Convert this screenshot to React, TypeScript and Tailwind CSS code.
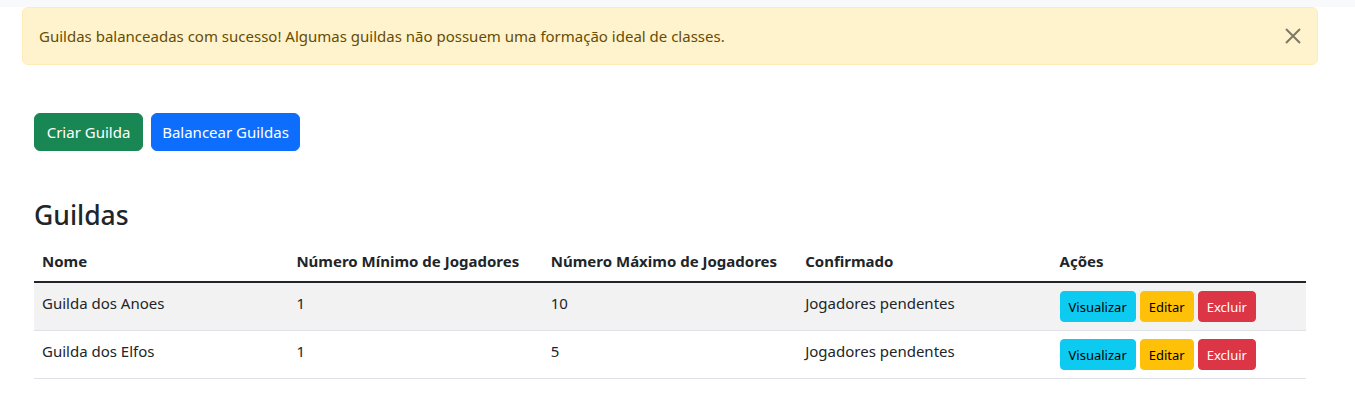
const guildas = [
  { nome: "Guilda dos Anoes", min: 1, max: 10, status: "Jogadores pendentes" },
  { nome: "Guilda dos Elfos", min: 1, max: 5, status: "Jogadores pendentes" },
];

const colunas = ["Nome", "Número Mínimo de Jogadores", "Número Máximo de Jogadores", "Confirmado", "Ações"];

export default function App() {
  return (
    <div className="min-h-[407px] bg-white font-['Noto_Sans',sans-serif] text-[15px] leading-6 text-[#212529]">
      <div className="h-[7px] bg-[#f8f9fa]" />

      <div className="ml-[22px] w-[1296px]">
        <div className="relative h-[58px] rounded-md border border-[#ffecb5] bg-[#fff3cd] px-4 py-4 pr-12 text-[#664d03]">
          Guildas balanceadas com sucesso! Algumas guildas não possuem uma formação ideal de classes.
          <button className="absolute right-0 top-0 flex h-14 w-12 items-center justify-center opacity-50">
            <svg width="16" height="16" viewBox="0 0 16 16" fill="none" stroke="#000" strokeWidth="2">
              <path d="M1 1 15 15M15 1 1 15" />
            </svg>
          </button>
        </div>
      </div>

      <div className="ml-[34px] w-[1272px]">
        <div className="mt-[48px] flex gap-2">
          <button className="h-[38px] w-[109px] rounded-md border border-[#198754] bg-[#198754] text-white">
            Criar Guilda
          </button>
          <button className="h-[38px] w-[149px] rounded-md border border-[#0d6efd] bg-[#0d6efd] text-white">
            Balancear Guildas
          </button>
        </div>

        <h3 className="mt-[47px] mb-[9px] text-[26.5px] leading-[34px] font-medium">Guildas</h3>

        <table className="w-[1272px] table-fixed border-collapse text-left">
          <thead>
            <tr>
              {colunas.map((c) => (
                <th key={c} className="border-b-2 border-[#212529] px-2 py-2 font-bold">
                  {c}
                </th>
              ))}
            </tr>
          </thead>
          <tbody>
            {guildas.map((g, i) => (
              <tr key={g.nome} className={i % 2 === 0 ? "bg-[#f2f2f2]" : ""}>
                <td className="border-b border-[#dee2e6] p-2 align-top">{g.nome}</td>
                <td className="border-b border-[#dee2e6] p-2 align-top">{g.min}</td>
                <td className="border-b border-[#dee2e6] p-2 align-top">{g.max}</td>
                <td className="border-b border-[#dee2e6] p-2 align-top">{g.status}</td>
                <td className="border-b border-[#dee2e6] p-2 align-top">
                  <div className="flex gap-1">
                    <button className="h-[31px] rounded border border-[#0dcaf0] bg-[#0dcaf0] px-2 text-[13px] text-black">
                      Visualizar
                    </button>
                    <button className="h-[31px] rounded border border-[#ffc107] bg-[#ffc107] px-2 text-[13px] text-black">
                      Editar
                    </button>
                    <button className="h-[31px] rounded border border-[#dc3545] bg-[#dc3545] px-2 text-[13px] text-white">
                      Excluir
                    </button>
                  </div>
                </td>
              </tr>
            ))}
          </tbody>
        </table>
      </div>
    </div>
  );
}
